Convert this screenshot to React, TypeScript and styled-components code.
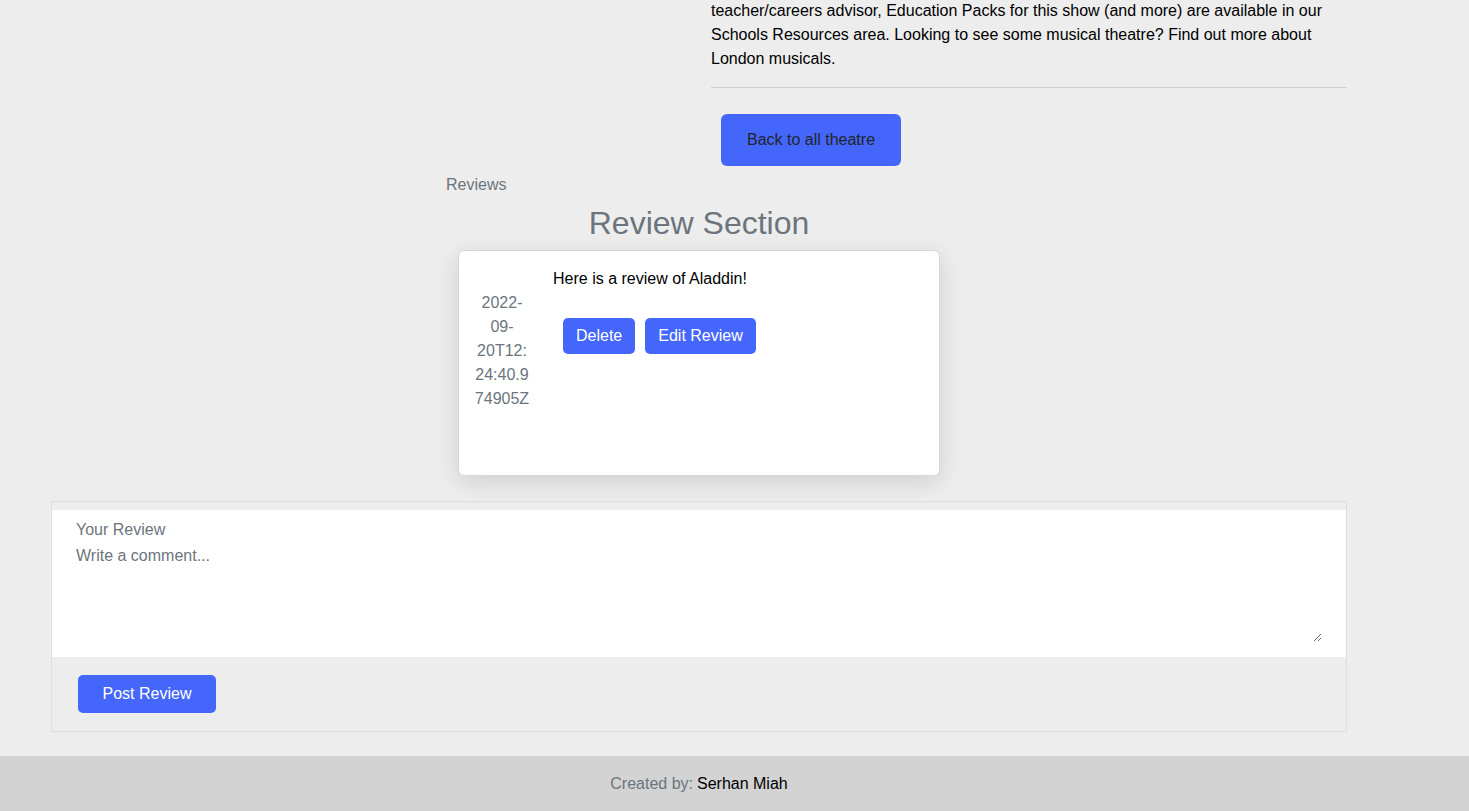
import React from "react";
import styled, { createGlobalStyle } from "styled-components";

const GlobalStyle = createGlobalStyle`
  html, body {
    margin: 0;
    padding: 0;
    background: #ededed;
    font-family: "Liberation Sans", Arial, Helvetica, sans-serif;
    font-size: 16px;
    color: #000;
  }
  * { box-sizing: border-box; }
`;

const Page = styled.div`
  display: flex;
  flex-direction: column;
  min-height: 811px;
  overflow: hidden;
`;

const Container = styled.main`
  width: 1296px;
  margin-left: 51px;
  display: flex;
  flex-direction: column;
`;

const TopRow = styled.section`
  display: grid;
  grid-template-columns: 660px 636px;
`;

const DetailColumn = styled.div`
  grid-column: 2;
  display: flex;
  flex-direction: column;
  align-items: flex-start;
`;

const Description = styled.p`
  margin: -1px 0 0;
  line-height: 24px;
  width: 100%;
`;

const Divider = styled.hr`
  width: 100%;
  margin: 16px 0 0;
  border: none;
  border-top: 1px solid #cfcfcf;
`;

const Button = styled.button<{ $dark?: boolean; $h: number; $px: number }>`
  font-family: inherit;
  font-size: 16px;
  height: ${(p) => p.$h}px;
  padding: 0 ${(p) => p.$px}px;
  background: #4566fa;
  color: ${(p) => (p.$dark ? "#212529" : "#ffffff")};
  border: none;
  border-radius: 5px;
  cursor: pointer;
  white-space: nowrap;
`;

const BackButton = styled(Button)`
  margin: 26px 0 0 10px;
  width: 180px;
  border-radius: 6px;
`;

const ReviewsLabel = styled.div`
  margin: 7px 0 0 395px;
  line-height: 24px;
  color: #6c757d;
`;

const SectionTitle = styled.h2`
  margin: 7px 0 0;
  font-size: 32px;
  font-weight: 400;
  line-height: 38px;
  text-align: center;
  color: #6c757d;
`;

const ReviewCard = styled.article`
  align-self: center;
  margin-top: 8px;
  width: 482px;
  min-height: 226px;
  background: #fff;
  border: 1px solid #d8d8d8;
  border-radius: 6px;
  box-shadow: 0 6px 24px rgba(0, 0, 0, 0.13);
  padding: 16px 16px 16px 15px;
  display: flex;
  align-items: flex-start;
`;

const DateColumn = styled.div`
  width: 56px;
  margin-top: 24px;
  text-align: center;
  line-height: 24px;
  color: #6c757d;
  overflow-wrap: anywhere;
`;

const ReviewBody = styled.div`
  margin-left: 23px;
  display: flex;
  flex-direction: column;
`;

const ReviewText = styled.div`
  line-height: 24px;
`;

const ActionRow = styled.div`
  display: flex;
  gap: 10px;
  margin: 27px 0 0 10px;
`;

const ReviewForm = styled.form`
  margin-top: 25px;
  border: 1px solid #dedede;
  padding: 8px 0 18px;
  display: flex;
  flex-direction: column;
  align-items: flex-start;
`;

const FieldBlock = styled.div`
  width: 100%;
  background: #fff;
  padding: 8px 24px 15px;
  display: flex;
  flex-direction: column;
`;

const FieldLabel = styled.label`
  line-height: 24px;
  color: #6c757d;
`;

const CommentBox = styled.textarea`
  width: 100%;
  height: 98px;
  margin-top: 2px;
  border: none;
  outline: none;
  padding: 2px 0;
  font-family: inherit;
  font-size: 16px;
  line-height: 20px;
  background: #fff;
  color: #212529;
  &::placeholder {
    color: #6c757d;
    opacity: 1;
  }
`;

const PostButton = styled(Button)`
  margin: 18px 0 0 26px;
  width: 138px;
`;

const Footer = styled.footer`
  margin-top: 24px;
  height: 55px;
  background: #d3d3d3;
  display: flex;
  align-items: center;
`;

const FooterInner = styled.div`
  width: 1296px;
  margin-left: 51px;
  display: flex;
  justify-content: center;
  gap: 4px;
`;

const Muted = styled.span`
  color: #6c757d;
`;

export default function App() {
  return (
    <Page>
      <GlobalStyle />
      <Container>
        <TopRow>
          <DetailColumn>
            <Description>
              teacher/careers advisor, Education Packs for this show (and more) are available in our
              Schools Resources area. Looking to see some musical theatre? Find out more about
              London musicals.
            </Description>
            <Divider />
            <BackButton type="button" $dark $h={52} $px={24}>
              Back to all theatre
            </BackButton>
          </DetailColumn>
        </TopRow>
        <ReviewsLabel>Reviews</ReviewsLabel>
        <SectionTitle>Review Section</SectionTitle>
        <ReviewCard>
          <DateColumn>2022-09-20T12:24:40.974905Z</DateColumn>
          <ReviewBody>
            <ReviewText>Here is a review of Aladdin!</ReviewText>
            <ActionRow>
              <Button type="button" $h={36} $px={13}>
                Delete
              </Button>
              <Button type="button" $h={36} $px={13}>
                Edit Review
              </Button>
            </ActionRow>
          </ReviewBody>
        </ReviewCard>
        <ReviewForm onSubmit={(e) => e.preventDefault()}>
          <FieldBlock>
            <FieldLabel htmlFor="comment">Your Review</FieldLabel>
            <CommentBox id="comment" placeholder="Write a comment..." />
          </FieldBlock>
          <PostButton type="submit" $h={38} $px={24}>
            Post Review
          </PostButton>
        </ReviewForm>
      </Container>
      <Footer>
        <FooterInner>
          <Muted>Created by:</Muted>
          <span>Serhan Miah</span>
        </FooterInner>
      </Footer>
    </Page>
  );
}
